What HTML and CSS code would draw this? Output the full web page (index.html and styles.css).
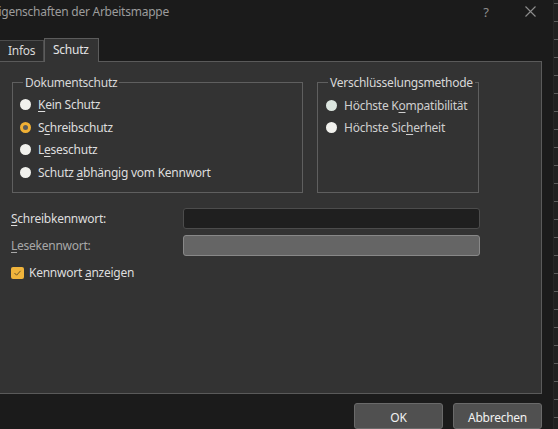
FILE: index.html
```html
<!DOCTYPE html>
<html lang="de">
<head>
<meta charset="utf-8">
<title>Eigenschaften der Arbeitsmappe</title>
<link rel="stylesheet" href="styles.css">
</head>
<body>
<div class="dialog">
  <div class="titlebar">
    <span class="title">Eigenschaften der Arbeitsmappe</span>
    <span class="help">?</span>
    <svg class="close" width="11" height="11" viewBox="0 0 11 11"><path d="M0.5 0.5 L10.5 10.5 M10.5 0.5 L0.5 10.5" stroke="#8e8e8e" stroke-width="1.1" fill="none"/></svg>
  </div>
  <div class="tabs">
    <div class="tab">Infos</div>
    <div class="tab active">Schutz</div>
  </div>
  <div class="panel">
    <div class="groups">
      <fieldset class="group doc">
        <legend>Dokumentschutz</legend>
        <div class="radio-row"><span class="radio"></span><span><u>K</u>ein Schutz</span></div>
        <div class="radio-row"><span class="radio checked"></span><span>S<u>c</u>hreibschutz</span></div>
        <div class="radio-row"><span class="radio"></span><span>L<u>e</u>seschutz</span></div>
        <div class="radio-row"><span class="radio"></span><span>Schutz <u>a</u>bhängig vom Kennwort</span></div>
      </fieldset>
      <fieldset class="group enc">
        <legend>Verschlüsselungsmethode</legend>
        <div class="radio-row dim"><span class="radio focus"></span><span>Höchste K<u>o</u>mpatibilität</span></div>
        <div class="radio-row dim"><span class="radio"></span><span>Höchste Sic<u>h</u>erheit</span></div>
      </fieldset>
    </div>
    <div class="field first">
      <span class="field-label"><u>S</u>chreibkennwort:</span>
      <span class="input"></span>
    </div>
    <div class="field">
      <span class="field-label disabled"><u>L</u>esekennwort:</span>
      <span class="input disabled"></span>
    </div>
    <div class="check-row">
      <span class="checkbox"><svg width="13" height="12" viewBox="0 0 13 12"><path d="M3.5 6 L5.6 8.2 L9.6 3.8" stroke="#6a5428" stroke-width="1" fill="none"/></svg></span>
      <span>Kennwort <u>a</u>nzeigen</span>
    </div>
  </div>
  <div class="buttons">
    <button class="btn">OK</button>
    <button class="btn">Abbrechen</button>
  </div>
</div>
<div class="strip"></div>
</body>
</html>
```
FILE: styles.css
```css
* { box-sizing: border-box; }
html, body { margin: 0; padding: 0; }
body {
  width: 558px;
  height: 429px;
  overflow: hidden;
  background: #1b1b1b;
  display: flex;
  font-family: "Noto Sans", "Open Sans", sans-serif;
  font-size: 12px;
  letter-spacing: -0.25px;
  color: #dedede;
}
u { text-decoration-thickness: 1px; text-underline-offset: 2px; }

.dialog {
  flex: none;
  width: 561px;
  margin-left: -8px;
  display: flex;
  flex-direction: column;
}

.titlebar {
  height: 38px;
  display: flex;
  align-items: flex-start;
  padding: 3px 17px 0 0;
}
.title {
  flex: 1;
  color: #9c9c9c;
  line-height: 18px;
}
.help {
  width: 12px;
  text-align: center;
  color: #8e8e8e;
  line-height: 18px;
  font-size: 13px;
  margin-right: 33px;
}
.close { margin-top: 3px; }

.tabs {
  height: 24px;
  display: flex;
  align-items: flex-end;
  padding-left: 7px;
  margin-bottom: -1px;
  position: relative;
  z-index: 1;
}
.tab {
  width: 45px;
  height: 21px;
  margin-bottom: 1px;
  padding: 1px 0 0 8px;
  line-height: 18px;
  background: #2b2b2b;
  border: 1px solid #4c4c4c;
  border-bottom: none;
  color: #d8d8d8;
}
.tab.active {
  width: 55px;
  height: 24px;
  margin-bottom: 0;
  padding-top: 2px;
  background: #333333;
  border-color: #5c5c5c;
  color: #e4e4e4;
}

.panel {
  height: 336px;
  margin-right: 11px;
  background: #333333;
  border: 1px solid #5a5a5a;
  padding-left: 18px;
  display: flex;
  flex-direction: column;
}

.groups {
  display: flex;
  gap: 14px;
  margin: 13px 0 0 1px;
}
.group {
  margin: 0;
  min-width: 0;
  border: 1px solid #5f5f5f;
  padding: 3px 0 8px 7px;
}
.group.doc { width: 291px; }
.group.enc { width: 162px; }
.group legend {
  padding: 0 2px;
  margin-left: 3px;
  line-height: 16px;
  color: #d8d8d8;
}
.radio-row {
  height: 22.5px;
  display: flex;
  align-items: center;
  gap: 7px;
  white-space: nowrap;
}
.radio-row.dim { color: #cfcfcf; }
.group.enc .radio-row { padding-left: 1px; }
.group.enc .radio-row:first-of-type { padding-top: 1px; }
.radio {
  flex: none;
  width: 11px;
  height: 11px;
  border-radius: 50%;
  background: #f1f1ed;
}
.radio.focus { background: #dce5df; }
.radio.checked {
  background: #5a5a5a;
  border: 3px solid #f0b035;
}

.field {
  height: 21px;
  display: flex;
  align-items: center;
  margin-top: 6px;
}
.field.first { margin-top: 15px; }
.field-label { width: 172px; flex: none; }
.field-label.disabled { color: #a8a8a8; }
.input {
  width: 297px;
  height: 21px;
  border-radius: 3px;
  background: #1f1f1f;
  border: 1px solid #4c4c4c;
}
.input.disabled {
  background: #656565;
  border-color: #888888;
}

.check-row {
  height: 18px;
  margin-top: 8px;
  display: flex;
  align-items: center;
  gap: 5px;
}
.checkbox {
  width: 13px;
  height: 12px;
  border-radius: 2px;
  background: #f0b43c;
  display: flex;
}

.buttons {
  display: flex;
  justify-content: flex-end;
  gap: 10px;
  margin: 9px 11px 0 0;
}
.btn {
  width: 89px;
  height: 26px;
  padding: 3px 0 0;
  font: inherit;
  letter-spacing: inherit;
  color: #f2f2f2;
  background: #505050;
  border: 1px solid #6a6a6a;
  border-radius: 3px;
}

.strip {
  flex: none;
  width: 5px;
  height: 429px;
  background-color: #202020;
  background-image: repeating-linear-gradient(to bottom, transparent 0 3px, #5c5c5c 3px 4px, transparent 4px 18px);
  background-size: 4px 100%;
  background-position: right top;
  background-repeat: no-repeat;
  border-left: 1px solid #262626;
}
```
